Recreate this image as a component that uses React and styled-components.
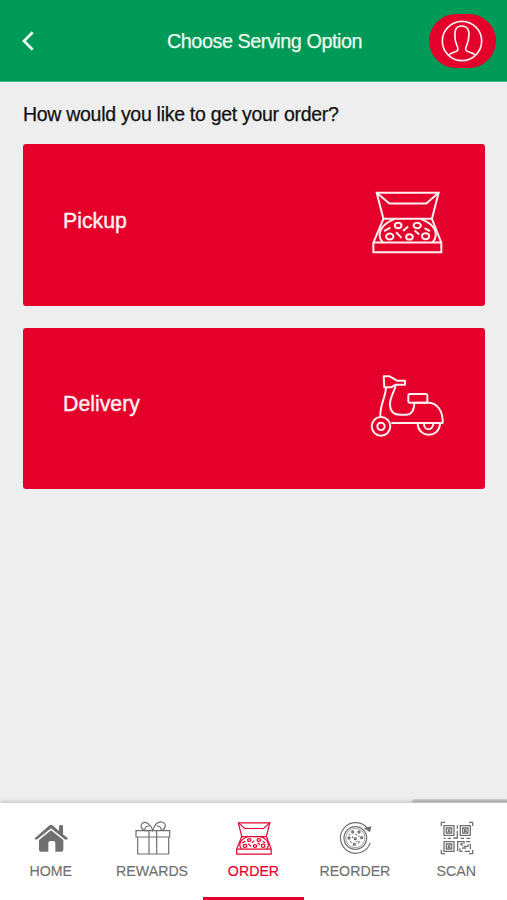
import styled, { createGlobalStyle } from "styled-components";

export default function App() {
  return (
    <>
      <GlobalStyle />
      <Screen>
        <Header>
          <BackButton aria-label="Back">
            <BackIcon />
          </BackButton>
          <Title>Choose Serving Option</Title>
          <ProfileButton aria-label="Profile">
            <ProfileIcon />
          </ProfileButton>
        </Header>
        <Content>
          <Question>How would you like to get your order?</Question>
          <Option>
            <OptionName>Pickup</OptionName>
            <IconBox>
              <PizzaBoxIcon width={71} height={63} stroke={6} />
            </IconBox>
          </Option>
          <Option>
            <OptionName>Delivery</OptionName>
            <IconBox>
              <ScooterIcon />
            </IconBox>
          </Option>
        </Content>
        <NavBar>
          <NavShade />
          <NavItem>
            <NavIcon><HomeIcon /></NavIcon>
            <NavLabel>HOME</NavLabel>
          </NavItem>
          <NavItem>
            <NavIcon><GiftIcon /></NavIcon>
            <NavLabel>REWARDS</NavLabel>
          </NavItem>
          <NavItem $active>
            <NavIcon><PizzaBoxIcon width={36} height={33} stroke={7} /></NavIcon>
            <NavLabel>ORDER</NavLabel>
          </NavItem>
          <NavItem>
            <NavIcon><ReorderIcon /></NavIcon>
            <NavLabel>REORDER</NavLabel>
          </NavItem>
          <NavItem>
            <NavIcon><ScanIcon /></NavIcon>
            <NavLabel>SCAN</NavLabel>
          </NavItem>
        </NavBar>
      </Screen>
    </>
  );
}

const BackIcon = () => (
  <svg width="12" height="20" viewBox="0 0 12 20" fill="none" stroke="currentColor" strokeWidth="2.7">
    <path d="M10.7 1.2 L2 10 L10.7 18.8" />
  </svg>
);

const ProfileIcon = () => (
  <svg width="42" height="42" viewBox="0 0 126 126" fill="none" stroke="currentColor" strokeWidth="5">
    <circle cx="63" cy="63" r="59" />
    <path d="M23 105 C34 94 51 99 51 87 C51 79 42 69 42 53 C40 33 43 18 62 18 C82 18 86 33 83 53 C82 70 74 79 74 87 C74 99 92 94 103 105" />
  </svg>
);

const PizzaBoxIcon = ({ width, height, stroke }) => (
  <svg width={width} height={height} viewBox="36 34 212 188" fill="none" stroke="currentColor" strokeWidth={stroke} preserveAspectRatio="none">
    <path d="M50 39 H235 L215 117 H70 Z" />
    <path d="M50 39 L88 71 H198 L235 39" />
    <path d="M70 117 L40 188 V217 H243 V188 L215 117 M40 188 H243" />
    <path d="M68 187 C48 165 60 134 103 118 M182 118 C225 133 237 163 217 187" />
    <ellipse cx="114" cy="137" rx="10" ry="8" />
    <ellipse cx="171" cy="137" rx="11" ry="8" />
    <ellipse cx="89" cy="170" rx="11" ry="9" />
    <ellipse cx="148" cy="171" rx="10" ry="8" />
    <ellipse cx="196" cy="169" rx="11" ry="9" />
    <path d="M72 154 L91 143 M129 153 L144 140 M108 157 L124 174 M163 152 L177 164 M193 145 L209 154" />
  </svg>
);

const ScooterIcon = () => (
  <svg width="75" height="63" viewBox="29 27 225 189" fill="none" stroke="currentColor" strokeWidth="6" strokeLinejoin="round">
    <path d="M70 34 H88 L110 47 H134 V59 H106 L92 67 H72 Z" />
    <path d="M77 68 C75 100 58 120 60 156" />
    <path d="M106 61 C102 82 87 98 89 121 C90 141 102 149 119 149 H139 C155 147 162 132 162 113 H206 C231 115 248 137 247 174 H93" />
    <rect x="144" y="87" width="57" height="26" rx="5" />
    <circle cx="62" cy="184" r="28" />
    <circle cx="62" cy="184" r="11" />
    <path d="M172 176 C174 220 237 220 239 176" />
    <path d="M191 176 C191 198 218 198 219 176" />
  </svg>
);

const HomeIcon = () => (
  <svg width="36" height="36" viewBox="0 0 108 108" fill="currentColor">
    <path d="M18 60 L54 31 L91 60 V89 Q91 95 85 95 H67 V69 Q67 63 61 63 H53 Q46 63 46 69 V95 H24 Q18 95 18 89 Z" />
    <path d="M5 55 L48 17 Q54 11 60 17 L78 33 V16 H90 V43 L105 55 Q102 62 95 58 L54 25 L13 58 Q7 62 5 55 Z" />
  </svg>
);

const GiftIcon = () => (
  <svg width="36" height="36" viewBox="0 0 108 108" fill="none" stroke="currentColor" strokeWidth="3.6">
    <path d="M3 32 H104 V51 H3 Z M8 51 V102 H101 V51 M42 32 V102 M65 32 V102" />
    <path d="M42 32 H28 C8 18 24 0 38 10 C47 16 51 24 53 31 C58 16 68 5 80 6 C96 9 93 25 80 32 M30 31 C28 23 33 18 43 18 M78 31 C80 23 74 18 65 18" />
  </svg>
);

const ReorderIcon = () => (
  <svg width="36" height="36" viewBox="0 0 108 108" fill="none" stroke="currentColor" strokeWidth="3.5">
    <path d="M93 26 A46 46 0 1 0 100 68" />
    <path d="M84 25 L101 21 L98 34 Z" fill="currentColor" />
    <circle cx="55" cy="54" r="34" />
    <circle cx="55" cy="54" r="29" strokeWidth="2" />
    <g strokeWidth="4">
      <circle cx="47" cy="36" r="3" />
      <circle cx="66" cy="36" r="3" />
      <circle cx="36" cy="54" r="3" />
      <circle cx="55" cy="56" r="3" />
      <circle cx="74" cy="53" r="3" />
      <circle cx="52" cy="73" r="3" />
    </g>
    <path d="M55 43 L61 46 M39 42 L35 45 M46 49 L48 54 M65 47 L67 51 M39 64 L44 68 M67 63 L64 71 M58 66 L61 64" />
  </svg>
);

const ScanIcon = () => (
  <svg width="34" height="34" viewBox="0 0 102 102" fill="none" stroke="currentColor" strokeWidth="3.8">
    <path d="M4 15 V4 H15 M87 4 H98 V15 M4 87 V98 H15 M87 98 H98 V87" />
    <path d="M12 14 H42 V43 H12 Z M61 14 H91 V43 H61 Z M12 62 H42 V91 H12 Z" />
    <path d="M19 21 H35 V36 H19 Z M68 21 H84 V36 H68 Z M19 69 H35 V84 H19 Z" />
    <path d="M25 27 H29 V31 H25 Z M74 27 H78 V31 H74 Z M25 75 H29 V79 H25 Z" />
    <path d="M52 13 V23 M52 29 V51 H40 M11 52 H17 M23 52 H33 M62 52 H72 M79 52 H91" />
    <path d="M53 91 V62 H72 V68 M60 69 H66 V75 M60 82 V91 H68 M78 62 H91 M91 68 V85 M71 76 H83 L86 70 M66 81 H78 M74 91 H90" />
  </svg>
);

const GlobalStyle = createGlobalStyle`
  * {
    box-sizing: border-box;
  }
  body {
    margin: 0;
    background: #eeeeee;
    font-family: "Liberation Sans", Arial, sans-serif;
  }
  button {
    border: 0;
    padding: 0;
    font-family: inherit;
  }
  svg {
    display: block;
  }
`;

const Screen = styled.div`
  height: 100vh;
  display: flex;
  flex-direction: column;
  overflow: hidden;
`;

const Header = styled.header`
  height: 82px;
  flex-shrink: 0;
  display: grid;
  grid-template-columns: 78px 1fr 78px;
  align-items: center;
  background: #009a58;
  border-bottom: 1px solid #4bb78b;
  color: #eefbf0;
`;

const BackButton = styled.button`
  padding: 1px 0 0 22px;
  background: none;
  color: inherit;
`;

const Title = styled.h1`
  margin: 2px 0 0 22px;
  font-size: 19.8px;
  font-weight: normal;
  letter-spacing: -0.45px;
  text-align: center;
  -webkit-text-stroke: 0.25px;
`;

const ProfileButton = styled.button`
  width: 67px;
  height: 54px;
  display: flex;
  align-items: center;
  justify-content: center;
  padding-right: 1px;
  border-radius: 27px;
  background: #e4002b;
  color: #fff0f0;
`;

const Content = styled.main`
  flex: 1;
  display: flex;
  flex-direction: column;
  gap: 22px;
  padding: 21px 22px 0 23px;
`;

const Question = styled.p`
  margin: 0 0 -4px;
  font-size: 19.5px;
  line-height: 23px;
  letter-spacing: -0.29px;
  color: #111;
  -webkit-text-stroke: 0.25px;
`;

const Option = styled.button`
  height: 161.5px;
  display: flex;
  align-items: center;
  justify-content: space-between;
  padding: 0 40px 9px 40px;
  border-radius: 3px;
  background: #e4002b;
  color: #fff0f0;
`;

const OptionName = styled.span`
  padding-top: 1.5px;
  font-size: 21.3px;
  -webkit-text-stroke: 0.4px;
`;

const IconBox = styled.span`
  width: 75px;
  display: flex;
  justify-content: center;
  padding-top: 4px;
`;

const NavBar = styled.nav`
  position: relative;
  height: 97px;
  flex-shrink: 0;
  display: grid;
  grid-template-columns: repeat(5, 1fr);
  background: #fff;
  box-shadow: 0 -1px 5px rgba(0, 0, 0, 0.22);
`;

const NavShade = styled.div`
  position: absolute;
  top: -4px;
  right: 0;
  width: 95px;
  height: 4px;
  border-radius: 4px 0 0 0;
  background: linear-gradient(#d2d2d2, #ababab 60%, #d0d0d0);
`;

const NavItem = styled.button`
  display: flex;
  flex-direction: column;
  align-items: center;
  justify-content: flex-start;
  padding: 17px 0 0 1px;
  background: none;
  border-bottom: 3px solid ${(props) => (props.$active ? "#e4002b" : "transparent")};
  color: ${(props) => (props.$active ? "#e4002b" : "#707070")};
`;

const NavIcon = styled.span`
  height: 36px;
  display: flex;
  align-items: center;
`;

const NavLabel = styled.span`
  margin: 7px 1px 0 0;
  font-size: 14.2px;
  line-height: 17px;
  -webkit-text-stroke: 0.15px;
`;
